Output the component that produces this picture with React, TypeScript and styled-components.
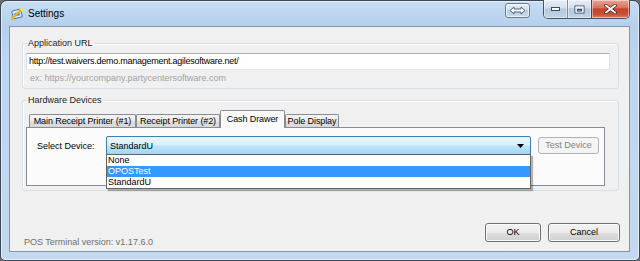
import { FC } from 'react';
import styled, { createGlobalStyle } from 'styled-components';

const GlobalStyle = createGlobalStyle`
    *, *::before, *::after { box-sizing: border-box; }
    html, body { margin: 0; padding: 0; background: #6b6b6b; }
    body { font-family: "Liberation Sans", Arial, sans-serif; font-size: 9px; color: #000; }
`;

const TABS = [
    { label: 'Main Receipt Printer (#1)', width: 107 },
    { label: 'Receipt Printer (#2)', width: 84 },
    { label: 'Cash Drawer', width: 65, active: true },
    { label: 'Pole Display', width: 54 },
];

const DEVICES = ['None', 'OPOSTest', 'StandardU'];

const Window = styled.div`
    width: 640px;
    height: 261px;
    display: flex;
    flex-direction: column;
    padding: 0 9px 8px 8px;
    border: 1px solid #3b4656;
    border-radius: 7px 7px 5px 5px;
    background: linear-gradient(180deg, #c6ddf4 0px, #b6d0ec 24px, #bdd5ee 60px, #c3d9ef 100%);
    box-shadow: inset 0 0 0 1px rgba(255, 255, 255, 0.55);
`;

const TitleBar = styled.div`
    height: 25px;
    display: flex;
    align-items: flex-start;
    flex-shrink: 0;
`;

const AppIcon = styled.svg`
    margin: 6px 0 0 2px;
    flex-shrink: 0;
`;

const TitleText = styled.div`
    margin: 6px 0 0 4px;
    font-size: 10px;
    line-height: 14px;
    color: #000;
`;

const TitleSpacer = styled.div`
    flex: 1;
`;

const HelperButton = styled.div`
    width: 25px;
    height: 15px;
    margin: 2px 13px 0 0;
    border: 1px solid #6b7d93;
    border-radius: 3px;
    background: linear-gradient(180deg, #e6eef7 0%, #d2dfee 45%, #b9cce2 50%, #cadbee 100%);
    box-shadow: inset 0 0 0 1px rgba(255, 255, 255, 0.6);
    display: flex;
    align-items: center;
    justify-content: center;
`;

const CaptionGroup = styled.div`
    display: flex;
    height: 19px;
    margin-top: -1px;
    border: 1px solid #45556a;
    border-top: none;
    border-radius: 0 0 5px 5px;
    overflow: hidden;
`;

const CaptionButton = styled.div<{ $w: number; $close?: boolean }>`
    width: ${p => p.$w}px;
    display: flex;
    align-items: center;
    justify-content: center;
    border-left: ${p => (p.$close ? '1px solid #6d3a33' : '1px solid #7b8da3')};
    background: ${p => (p.$close
        ? 'linear-gradient(180deg, #e8a595 0%, #d9735f 42%, #c4432a 50%, #c9513a 80%, #d9826d 100%)'
        : 'linear-gradient(180deg, #e7eef7 0%, #d3e0ee 42%, #b6c9df 50%, #c1d3e7 100%)')};
    box-shadow: inset 0 0 0 1px rgba(255, 255, 255, 0.45);
    &:first-child { border-left: none; }
`;

const Client = styled.div`
    flex: 1;
    display: flex;
    flex-direction: column;
    border: 1px solid #8195ad;
    background: #f0f0f0;
    padding: 10px 10px 9px 12px;
`;

const GroupBox = styled.fieldset<{ $gapTop?: number }>`
    margin: ${p => p.$gapTop ?? 0}px 0 0 0;
    padding: 0 8px 4px 3px;
    border: 1px solid #d5dfe5;
    border-radius: 3px;
    min-width: 0;
    box-shadow: inset 1px 1px 0 #ffffff;
`;

const GroupTitle = styled.legend`
    padding: 0 1px;
    margin-left: 1px;
    font-size: 9px;
    line-height: 13px;
    color: #1a1a1a;
`;

const TextBox = styled.div`
    margin-top: 3px;
    height: 17px;
    padding: 0 2px;
    line-height: 15px;
    letter-spacing: -0.25px;
    background: #ffffff;
    border: 1px solid #e3e9ef;
    border-top-color: #abadb3;
    border-left-color: #dbdfe6;
    border-right-color: #dbdfe6;
    white-space: nowrap;
`;

const Hint = styled.div`
    margin-top: 2px;
    padding-left: 4px;
    line-height: 12px;
    color: #a2a2a2;
`;

const TabStrip = styled.div`
    margin-top: 3px;
    height: 18px;
    margin-bottom: -1px;
    padding-left: 3px;
    display: flex;
    align-items: flex-end;
    position: relative;
    z-index: 1;
`;

const Tab = styled.div<{ $w: number; $active?: boolean }>`
    width: ${p => p.$w}px;
    height: ${p => (p.$active ? 18 : 13)}px;
    margin-bottom: ${p => (p.$active ? 0 : 1)}px;
    padding-top: ${p => (p.$active ? 2 : 0)}px;
    line-height: ${p => (p.$active ? 13 : 12)}px;
    letter-spacing: -0.1px;
    text-align: center;
    white-space: nowrap;
    overflow: hidden;
    border: 1px solid #898c95;
    border-bottom: none;
    border-radius: 2px 2px 0 0;
    background: ${p => (p.$active
        ? '#fbfbfb'
        : 'linear-gradient(180deg, #f3f3f3 0%, #ececec 50%, #dfdfdf 51%, #d8d8d8 100%)')};
`;

const TabPanel = styled.div`
    height: 59px;
    margin-right: 5px;
    padding: 8px 0 0 10px;
    border: 1px solid #898c95;
    background: #fbfbfb;
`;

const DeviceRow = styled.div`
    display: flex;
    align-items: center;
    height: 19px;
`;

const FieldLabel = styled.div`
    width: 69px;
    line-height: 12px;
`;

const Combo = styled.div`
    position: relative;
    width: 425px;
    height: 19px;
    display: flex;
    align-items: center;
    padding: 0 6px 0 3px;
    border: 1px solid #3c7fb1;
    border-radius: 2px;
    background: linear-gradient(180deg, #eaf6fd 0%, #d9f0fc 48%, #bee6fd 52%, #a2d5f3 100%);
`;

const ComboText = styled.div`
    flex: 1;
    line-height: 12px;
`;

const DropList = styled.div`
    position: absolute;
    left: -1px;
    top: 100%;
    width: 425px;
    border: 1px solid #646464;
    background: #ffffff;
    box-shadow: 2px 2px 1px rgba(0, 0, 0, 0.28);
    z-index: 5;
`;

const DropItem = styled.div<{ $selected?: boolean }>`
    height: 11px;
    line-height: 11px;
    padding-left: 1px;
    color: ${p => (p.$selected ? '#ffffff' : '#000000')};
    background: ${p => (p.$selected ? '#3399ff' : 'transparent')};
`;

const DisabledButton = styled.div`
    margin-left: 7px;
    width: 61px;
    height: 17px;
    line-height: 15px;
    text-align: center;
    color: #838383;
    border: 1px solid #adb2b5;
    border-radius: 3px;
    background: #f4f4f4;
`;

const Footer = styled.div`
    margin-top: auto;
    display: flex;
    align-items: flex-end;
`;

const Version = styled.div`
    margin: 0 0 -6px 2px;
    line-height: 12px;
    color: #6f6f6f;
`;

const PushButton = styled.div<{ $w: number; $first?: boolean }>`
    margin-left: ${p => (p.$first ? 'auto' : '7px')};
    margin-right: ${p => (p.$first ? 0 : -1)}px;
    width: ${p => p.$w}px;
    height: 19px;
    line-height: 17px;
    text-align: center;
    border: 1px solid #707070;
    border-radius: 3px;
    background: linear-gradient(180deg, #f2f2f2 0%, #ebebeb 50%, #dddddd 51%, #cfcfcf 100%);
    box-shadow: inset 0 0 0 1px #fbfbfb;
`;

const WindowIcon: FC = () => (
    <AppIcon width="13" height="13" viewBox="0 0 13 13">
        <rect x="1.5" y="3" width="9" height="8" rx="1" transform="rotate(-14 6 7)" fill="#eaf3fc" stroke="#3f74b8" />
        <rect x="3" y="5.5" width="6" height="3.5" transform="rotate(-14 6 7)" fill="#5d9ae0" />
        <path d="M1 12 L10 2.5" stroke="#f4b400" strokeWidth="2.2" strokeLinecap="round" />
        <path d="M9 1 L12 4 M10.5 0.8 L10.5 4 M9 2.4 L12 2.4" stroke="#ffe066" strokeWidth="1" />
    </AppIcon>
);

const CaptionButtons: FC = () => (
    <CaptionGroup>
        <CaptionButton $w={23}>
            <svg width="11" height="6" viewBox="0 0 11 6">
                <rect x="1.5" y="1.5" width="8" height="3" fill="#ffffff" stroke="#3d4b5d" />
            </svg>
        </CaptionButton>
        <CaptionButton $w={24}>
            <svg width="11" height="9" viewBox="0 0 11 9">
                <rect x="1" y="1" width="9" height="7" fill="none" stroke="#3d4b5d" />
                <rect x="2" y="2" width="7" height="5" fill="none" stroke="#ffffff" />
                <rect x="3.5" y="4.5" width="4" height="1.5" fill="none" stroke="#3d4b5d" strokeWidth="1" />
            </svg>
        </CaptionButton>
        <CaptionButton $w={38} $close>
            <svg width="13" height="10" viewBox="0 0 13 10">
                <path d="M2 1.5 L11 8.5 M11 1.5 L2 8.5" stroke="#4a2620" strokeWidth="3.4" strokeLinecap="square" />
                <path d="M2 1.5 L11 8.5 M11 1.5 L2 8.5" stroke="#ffffff" strokeWidth="1.8" strokeLinecap="square" />
            </svg>
        </CaptionButton>
    </CaptionGroup>
);

const SelectArrow: FC = () => (
    <svg width="7" height="4" viewBox="0 0 7 4">
        <path d="M0 0 H7 L3.5 4 Z" fill="#000000" />
    </svg>
);

const App: FC = () => (
    <>
        <GlobalStyle />
        <Window>
            <TitleBar>
                <WindowIcon />
                <TitleText>Settings</TitleText>
                <TitleSpacer />
                <HelperButton>
                    <svg width="17" height="9" viewBox="0 0 17 9">
                        <path d="M1 4.5 L5 1 V3 H12 V1 L16 4.5 L12 8 V6 H5 V8 Z" fill="#ffffff" stroke="#55657a" strokeWidth="1" strokeLinejoin="round" />
                    </svg>
                </HelperButton>
                <CaptionButtons />
            </TitleBar>
            <Client>
                <GroupBox>
                    <GroupTitle>Application URL</GroupTitle>
                    <TextBox>http://test.waivers.demo.management.agilesoftware.net/</TextBox>
                    <Hint>ex: https://yourcompany.partycentersoftware.com</Hint>
                </GroupBox>
                <GroupBox $gapTop={5}>
                    <GroupTitle>Hardware Devices</GroupTitle>
                    <TabStrip>
                        {TABS.map(tab => (
                            <Tab key={tab.label} $w={tab.width} $active={tab.active}>{tab.label}</Tab>
                        ))}
                    </TabStrip>
                    <TabPanel>
                        <DeviceRow>
                            <FieldLabel>Select Device:</FieldLabel>
                            <Combo>
                                <ComboText>StandardU</ComboText>
                                <SelectArrow />
                                <DropList>
                                    {DEVICES.map(name => (
                                        <DropItem key={name} $selected={name === 'OPOSTest'}>{name}</DropItem>
                                    ))}
                                </DropList>
                            </Combo>
                            <DisabledButton>Test Device</DisabledButton>
                        </DeviceRow>
                    </TabPanel>
                </GroupBox>
                <Footer>
                    <Version>POS Terminal version: v1.17.6.0</Version>
                    <PushButton $w={56} $first>OK</PushButton>
                    <PushButton $w={72}>Cancel</PushButton>
                </Footer>
            </Client>
        </Window>
    </>
);

export default App;
